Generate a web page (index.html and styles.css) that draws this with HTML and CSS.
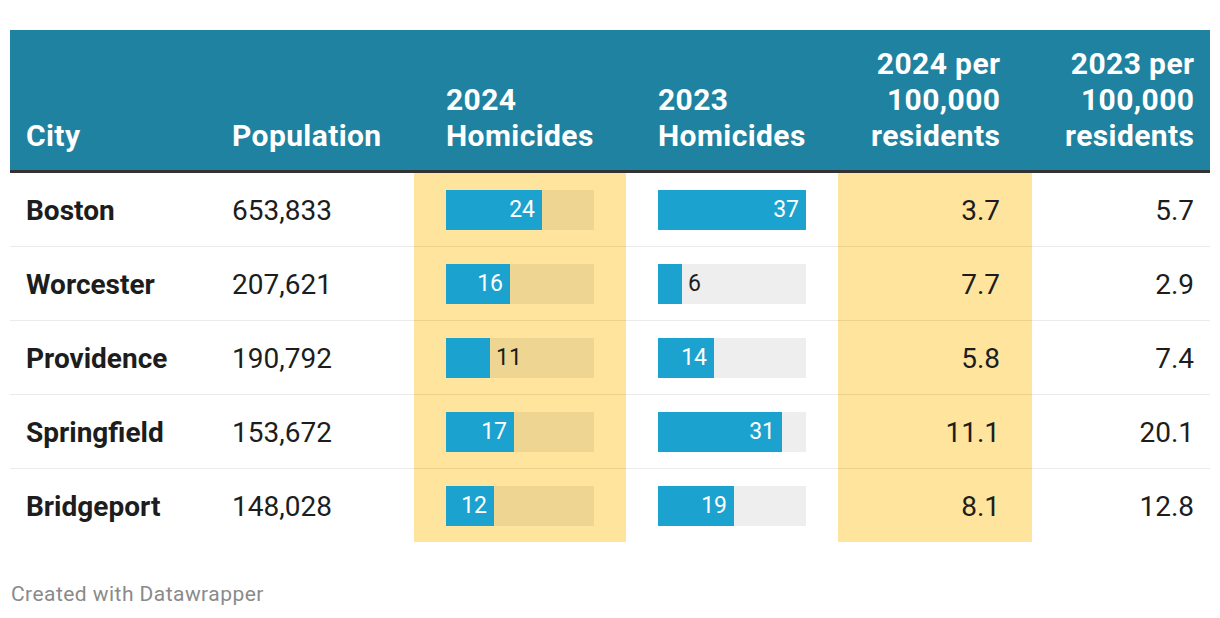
FILE: index.html
```html
<!DOCTYPE html>
<html>
<head>
<meta charset="utf-8">
<link rel="stylesheet" href="styles.css">
</head>
<body>
<div class="chart">
  <div class="table">
    <div class="row head">
      <div class="cell c1">City</div>
      <div class="cell c2">Population</div>
      <div class="cell c3">2024<br>Homicides</div>
      <div class="cell c4">2023<br>Homicides</div>
      <div class="cell c5 num">2024 per<br>100,000<br>residents</div>
      <div class="cell c6 num">2023 per<br>100,000<br>residents</div>
    </div>

    <div class="row body">
      <div class="cell c1 city">Boston</div>
      <div class="cell c2">653,833</div>
      <div class="cell c3 hl"><div class="track"><div class="fill" style="width:96px"><span class="lab in">24</span></div></div></div>
      <div class="cell c4"><div class="track"><div class="fill" style="width:148px"><span class="lab in">37</span></div></div></div>
      <div class="cell c5 hl num">3.7</div>
      <div class="cell c6 num">5.7</div>
    </div>

    <div class="row body">
      <div class="cell c1 city">Worcester</div>
      <div class="cell c2">207,621</div>
      <div class="cell c3 hl"><div class="track"><div class="fill" style="width:64px"><span class="lab in">16</span></div></div></div>
      <div class="cell c4"><div class="track"><div class="fill" style="width:24px"></div><span class="lab out">6</span></div></div>
      <div class="cell c5 hl num">7.7</div>
      <div class="cell c6 num">2.9</div>
    </div>

    <div class="row body">
      <div class="cell c1 city">Providence</div>
      <div class="cell c2">190,792</div>
      <div class="cell c3 hl"><div class="track"><div class="fill" style="width:44px"></div><span class="lab out">11</span></div></div>
      <div class="cell c4"><div class="track"><div class="fill" style="width:56px"><span class="lab in">14</span></div></div></div>
      <div class="cell c5 hl num">5.8</div>
      <div class="cell c6 num">7.4</div>
    </div>

    <div class="row body">
      <div class="cell c1 city">Springfield</div>
      <div class="cell c2">153,672</div>
      <div class="cell c3 hl"><div class="track"><div class="fill" style="width:68px"><span class="lab in">17</span></div></div></div>
      <div class="cell c4"><div class="track"><div class="fill" style="width:124px"><span class="lab in">31</span></div></div></div>
      <div class="cell c5 hl num">11.1</div>
      <div class="cell c6 num">20.1</div>
    </div>

    <div class="row body last">
      <div class="cell c1 city">Bridgeport</div>
      <div class="cell c2">148,028</div>
      <div class="cell c3 hl"><div class="track"><div class="fill" style="width:48px"><span class="lab in">12</span></div></div></div>
      <div class="cell c4"><div class="track"><div class="fill" style="width:76px"><span class="lab in">19</span></div></div></div>
      <div class="cell c5 hl num">8.1</div>
      <div class="cell c6 num">12.8</div>
    </div>
  </div>
  <div class="footer">Created with Datawrapper</div>
</div>
</body>
</html>
```

FILE: styles.css
```css
* { box-sizing: border-box; }
html, body { margin: 0; padding: 0; background: #fff; }
body { font-family: Roboto, "Liberation Sans", sans-serif; color: #1d1d1d; }

.chart { padding: 30px 10px 0 10px; width: 1220px; }

.table { width: 1200px; }

.row {
  display: grid;
  grid-template-columns: 190px 214px 212px 212px 194px 178px;
}

.head {
  height: 143px;
  background: #1f82a0;
  border-bottom: 3px solid #333333;
  color: #ffffff;
  font-weight: 700;
  font-size: 30px;
  line-height: 36px;
  letter-spacing: 0.4px;
}
.head .cell {
  align-self: end;
  padding-bottom: 16px;
}
.head .num { margin-right: -0.4px; }

.cell { padding-left: 32px; padding-right: 32px; }
.c1 { padding-left: 16px; padding-right: 0; }
.c6 { padding-right: 16px; }
.num { text-align: right; }

.body .cell {
  height: 74px;
  padding-top: 2px;
  border-bottom: 1px solid rgba(0,0,0,0.08);
  display: flex;
  align-items: center;
  font-size: 28px;
}
.body.last .cell { border-bottom: none; height: 73px; }
.body .num { justify-content: flex-end; }
.city { font-weight: 700; }

.hl { background: #fee49c; }

.track {
  width: 148px;
  height: 40px;
  margin-top: -2px;
  background: #eeeeee;
  display: flex;
  align-items: center;
}
.hl .track { background: #eed591; }
.fill {
  height: 40px;
  background: #1ba2ce;
  display: flex;
  align-items: center;
  justify-content: flex-end;
  flex: none;
}
.lab { font-size: 23px; line-height: 40px; }
.lab.in { color: #ffffff; padding-right: 7px; }
.lab.out { color: #1d1d1d; margin-left: 6px; }

.footer {
  margin-top: 40px;
  padding-left: 1px;
  font-size: 21px;
  letter-spacing: 0.45px;
  color: #8a8a8a;
}
```
